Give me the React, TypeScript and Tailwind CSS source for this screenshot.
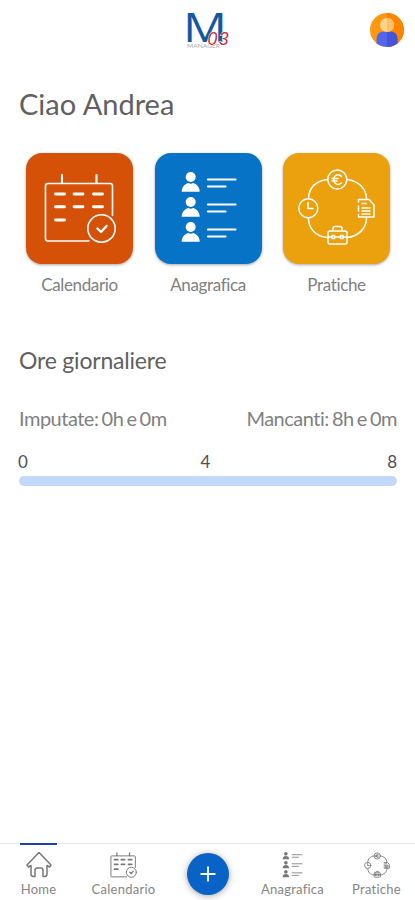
import type { ReactNode } from 'react';

function CalendarDrawing({ stroke = 1.6 }: { stroke?: number }) {
    return (
        <g fill="none" stroke="currentColor" strokeWidth={stroke} strokeLinecap="round" strokeLinejoin="round">
            <path d="M63 88H22q-2.500 0-2.500-2.500V33q0-2.500 2.500-2.500H84q2.500 0 2.500 2.500V62.500" />
            <path d="M36 22V30M70.500 22V30" strokeWidth={stroke * 1.300} />
            <path d="M29.500 41h9M48 41h9M67.500 41h9M29.500 53.700h9M48 53.700h9M67.500 53.700h9M29.500 67h9" strokeWidth={stroke * 1.800} />
            <circle cx="75.500" cy="75.500" r="13.700" />
            <path d="M71.500 75.500l3.500 3.500 5.500-6" strokeWidth={stroke * 1.500} />
        </g>
    );
}

function PeopleDrawing() {
    return (
        <g fill="currentColor">
            {[0, 25, 50].map((y) => (
                <g key={y} transform={`translate(0 ${y})`}>
                    <circle cx="35.700" cy="24" r="5" />
                    <path d="M26.700 38.700c0-4.500 3-7.700 6.500-8.700q2.500 1.500 5 0c3.500 1 6.500 4.200 6.500 8.700z" />
                    <path d="M53 26.500H80.500M53 33.500H70.500" stroke="currentColor" strokeWidth="2.200" strokeLinecap="round" />
                </g>
            ))}
        </g>
    );
}

function CycleDrawing({ stroke = 1.5 }: { stroke?: number }) {
    return (
        <g fill="none" stroke="currentColor" strokeWidth={stroke} strokeLinecap="round" strokeLinejoin="round">
            <path d="M64 26.500c11 1.500 19 8 19.500 19M83.500 65c0 10-8 18.500-19.500 19.500M44.500 84.500C33 83.500 25.500 76 25.500 65M25.500 45.500C26 34.500 33 28 44.500 26.500" />
            <circle cx="54.300" cy="26.500" r="9.500" />
            <path d="M58.500 23.500q-2.500-3-6-1-2.500 2-1.500 6 2.500 5 7.500 1.500M49 25.500h6M49 28h5" />
            <circle cx="25.300" cy="55.300" r="9.500" />
            <path d="M25 49.500v6h5" />
            <path d="M75.500 49v-2.500H86l5 5.500v12H75.500v-2.500M75.500 53v5M79 50.500h4M79 55h8M79 58h8M79 61h8" />
            <path d="M50 78v-2.500q0-2 2-2h5q2 0 2 2V78M47 78h15q2 0 2 2v9q0 2-2 2H47q-2 0-2-2v-9q0-2 2-2zM45 84h4M52 84h5M60 84h4M49 82.500h2.500v3H49zM57.500 82.500H60v3h-2.500z" />
        </g>
    );
}

function Tile({ label, color, children }: { label: string; color: string; children: ReactNode }) {
    return (
        <div className="flex w-[107px] flex-col items-center">
            <div className={`h-[111px] w-[107px] rounded-[16px] text-white shadow-[0_1px_3px_rgba(0,0,0,0.35)] ${color}`}>
                <svg viewBox="0 0 107 111" className="h-[111px] w-[107px]">
                    {children}
                </svg>
            </div>
            <span className="mt-[9px] text-[17px] leading-6 tracking-[-0.35px] whitespace-nowrap text-[#808080]">{label}</span>
        </div>
    );
}

function NavItem({ label, width, children }: { label: string; width: string; children: ReactNode }) {
    return (
        <div className={`flex flex-col items-center ${width}`}>
            <div className="mt-[7px] flex h-[27px] items-center text-[#777]">{children}</div>
            <span className="mt-[3px] text-[13px] leading-4 tracking-[0.25px] whitespace-nowrap text-[#858585]">{label}</span>
        </div>
    );
}

export default function App() {
    return (
        <div className="flex h-[900px] w-[415px] flex-col overflow-hidden bg-white font-['Lato',sans-serif]">
            <header className="flex h-[60px] items-start justify-between pr-[11px] pl-[185px]">
                <svg viewBox="0 0 48 42" className="mt-2 h-[42px] w-[48px] overflow-visible">
                    <text x="-2" y="34" fontFamily="Open Sans, sans-serif" fontSize="41" fill="#1557a5" textLength="44" lengthAdjust="spacingAndGlyphs">M</text>
                    <text x="2" y="40" fontFamily="Lato, sans-serif" fontSize="5" fill="#aaa" textLength="33" lengthAdjust="spacingAndGlyphs">MANAGER</text>
                    <text x="22.500" y="37" fontFamily="Liberation Sans, sans-serif" fontStyle="italic" fontSize="17.500" fill="#c5333b" stroke="#fff" strokeWidth="1" paintOrder="stroke" textLength="21">03</text>
                </svg>
                <svg viewBox="0 0 34 34" className="mt-[13px] h-[34px] w-[34px]">
                    <circle cx="17" cy="17" r="17" fill="#ff9811" />
                    <path d="M17 0a17 17 0 0 1 0 34z" fill="#ff8500" />
                    <path d="M6.500 30.500v-4q0-8 7.500-8h6q7.500 0 7.500 8v4Q17 37.500 6.500 30.500z" fill="#5166ed" />
                    <path d="M17 18.500h3q7.500 0 7.500 8v4Q22 34 17 34z" fill="#4654d5" />
                    <circle cx="17" cy="12" r="7" fill="#ffd38b" />
                    <path d="M17 5a7 7 0 0 1 0 14z" fill="#ffc066" />
                </svg>
            </header>

            <main className="flex-1 px-[18px]">
                <h1 className="mt-[26px] pl-px text-[29px] leading-9 text-[#606060]">Ciao Andrea</h1>

                <div className="mt-[31px] flex justify-between pr-[7px] pl-2">
                    <Tile label="Calendario" color="bg-[#d65108]">
                        <CalendarDrawing />
                    </Tile>
                    <Tile label="Anagrafica" color="bg-[#0673c6]">
                        <PeopleDrawing />
                    </Tile>
                    <Tile label="Pratiche" color="bg-[#eba00e]">
                        <CycleDrawing />
                    </Tile>
                </div>

                <h2 className="mt-[47px] pl-px text-[23px] leading-8 tracking-[-0.2px] text-[#606060]">Ore giornaliere</h2>

                <div className="mt-[28px] flex justify-between pl-px text-[20px] leading-7 tracking-[-0.5px] [word-spacing:-1.5px] text-[#808080]">
                    <span>Imputate: 0h e 0m</span>
                    <span>Mancanti: 8h e 0m</span>
                </div>
                <div className="mt-[18px] grid grid-cols-3 text-[17px] leading-6 text-[#505050]">
                    <span>0</span>
                    <span className="pr-1 text-center">4</span>
                    <span className="text-right">8</span>
                </div>
                <div className="mt-[2px] ml-px h-[10px] rounded-full bg-[#c2d9fc]" />
            </main>

            <nav className="flex h-[57px] border-t border-[#e8e8e8] pl-[20px]">
                <div className="-mt-px border-t-2 border-[#1e3fae]">
                    <div className="-mt-px">
                        <NavItem label="Home" width="w-[37px]">
                            <svg viewBox="0 0 26 27" className="h-[27px] w-[26px]" fill="none" stroke="currentColor" strokeWidth="1.500" strokeLinejoin="round">
                                <path d="M1 14L13 1.500 25 14l-1.500 2-2.500-1.500V23q0 2.500-2.500 2.500H17V19q0-2-2-2h-4q-2 0-2 2v6.500H7.500Q5 25.500 5 23v-8.500L2.500 16z" />
                            </svg>
                        </NavItem>
                    </div>
                </div>
                <div className="ml-[33px]">
                    <NavItem label="Calendario" width="w-[67px]">
                        <svg viewBox="17 20 74 71" className="h-[26px] w-[27px]">
                            <CalendarDrawing stroke={2.6} />
                        </svg>
                    </NavItem>
                </div>
                <div className="mt-[9px] ml-[30px] flex h-[42px] w-[42px] items-center justify-center rounded-full bg-[#0962c6] text-white shadow-[0_1px_7px_rgba(0,0,0,0.35)]">
                    <svg viewBox="0 0 18 18" className="h-[18px] w-[18px]">
                        <path d="M9 1.500v15M1.500 9h15" stroke="currentColor" strokeWidth="1.800" />
                    </svg>
                </div>
                <div className="ml-[30px]">
                    <NavItem label="Anagrafica" width="w-[67px]">
                        <svg viewBox="25 17 58 73" className="h-[27px] w-[21px]">
                            <PeopleDrawing />
                        </svg>
                    </NavItem>
                </div>
                <div className="ml-[25px]">
                    <NavItem label="Pratiche" width="w-[51px]">
                        <svg viewBox="14 15 79 78" className="h-[26px] w-[26px]">
                            <CycleDrawing stroke={2.6} />
                        </svg>
                    </NavItem>
                </div>
            </nav>
        </div>
    );
}
